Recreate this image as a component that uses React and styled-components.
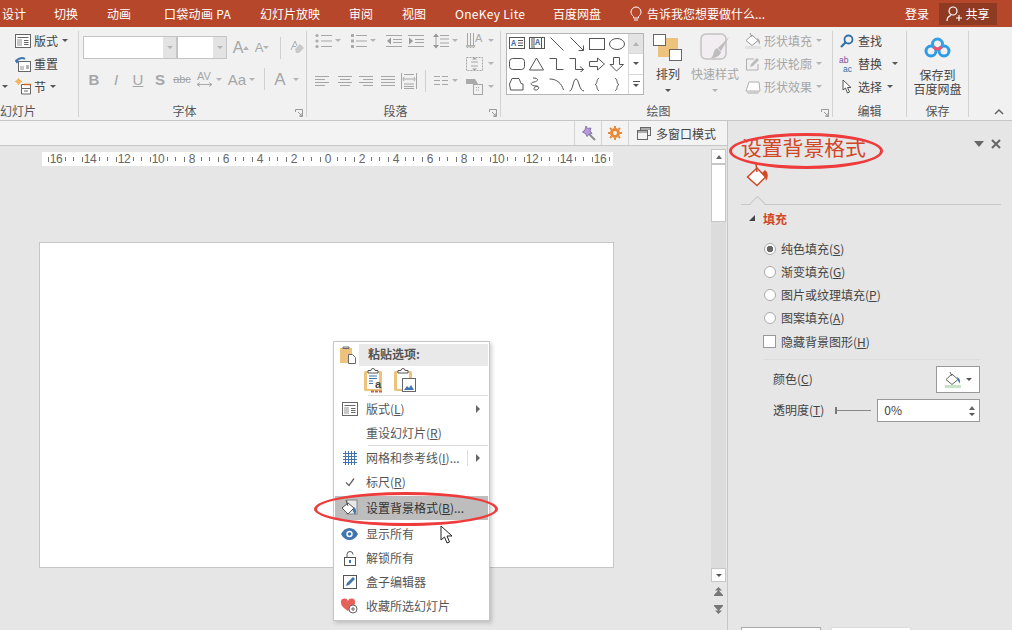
import React from 'react';
import styled, { createGlobalStyle } from 'styled-components';

const colors = {
  accent: '#b7472a',
  accentDark: '#8f3a22',
  ribbon: '#f1f1f1',
  work: '#e6e6e6',
  line: '#c6c6c6',
  text: '#444',
  muted: '#a6a6a6',
  orange: '#d24726',
  red: '#ee3b3b',
  blue: '#3f74ae',
  yellow: '#ecc27c'
};

const GlobalStyle = createGlobalStyle`
  html, body { margin: 0; padding: 0; }
  body {
    width: 1012px;
    height: 630px;
    overflow: hidden;
    font-family: "Noto Sans CJK SC", "Noto Sans", sans-serif;
    font-size: 12px;
    color: ${colors.text};
  }
  * { box-sizing: border-box; }
  u { text-underline-offset: 1px; }
`;

const Page = styled.div`
  position: relative;
  width: 1012px;
  height: 630px;
  overflow: hidden;
  display: flex;
  flex-direction: column;
`;

/* title tabs */
const TabBar = styled.div`
  height: 27px;
  flex: none;
  background: ${colors.accent};
  color: #fff;
  display: flex;
  align-items: center;
  padding-left: 2px;
  line-height: 27px;
`;
const Tab = styled.span`
  width: ${p => p.$w}px;
  flex: none;
  letter-spacing: ${p => (p.$wide ? '0.3px' : '0')};
  white-space: nowrap;
`;
const TellMe = styled.div`
  display: flex;
  align-items: center;
  gap: 5px;
  width: 275px;
  flex: none;
  white-space: nowrap;
`;
const ShareBtn = styled.div`
  width: 58px;
  height: 22px;
  background: ${colors.accentDark};
  display: flex;
  align-items: center;
  justify-content: center;
  gap: 3px;
`;

/* ribbon */
const Ribbon = styled.div`
  height: 94px;
  flex: none;
  background: ${colors.ribbon};
  border-bottom: 1px solid ${colors.line};
  display: flex;
`;
const Group = styled.div`
  width: ${p => p.$w}px;
  flex: none;
  display: flex;
  flex-direction: column;
  position: relative;
  &::after {
    content: '';
    display: ${p => (p.$last ? 'none' : 'block')};
    position: absolute;
    right: 0;
    top: 4px;
    bottom: 3px;
    width: 1px;
    background: #d2d2d2;
  }
`;
const GroupBody = styled.div`
  height: 76px;
  padding-top: 2px;
  display: flex;
`;
const GroupLabel = styled.div`
  height: 17px;
  line-height: 16px;
  text-align: ${p => p.$align || 'center'};
  color: #555;
  padding-right: ${p => (p.$launch ? 17 : p.$align ? 0 : 1)}px;
`;
const LauncherSvg = styled.svg`
  position: absolute;
  right: 4px;
  bottom: 3px;
`;
const CollapseSvg = styled.svg`
  position: absolute;
  right: 9px;
  bottom: 5px;
`;
const Col = styled.div`
  display: flex;
  flex-direction: column;
  width: ${p => (p.$w ? `${p.$w}px` : 'auto')};
  padding-left: ${p => p.$pl || 0}px;
`;
const Row = styled.div`
  display: flex;
  align-items: center;
  height: ${p => p.$h || 23}px;
  margin-top: ${p => p.$mt || 0}px;
  gap: ${p => p.$gap || 0}px;
  color: ${p => (p.$off ? colors.muted : colors.text)};
  white-space: nowrap;
`;
const Caret = styled.i`
  display: block;
  flex: none;
  width: 0;
  height: 0;
  margin-left: ${p => p.$ml || 0}px;
  margin-top: ${p => p.$mt || 0}px;
  border-left: 3px solid transparent;
  border-right: 3px solid transparent;
  border-top: 3px solid ${p => (p.$off ? '#b4b4b4' : '#555')};
`;
const Slot = styled.div`
  width: ${p => p.$w}px;
  flex: none;
  display: flex;
  flex-direction: ${p => (p.$stack ? 'column' : 'row')};
  align-items: center;
  justify-content: center;
  margin-left: ${p => p.$ml || 0}px;
`;
const Combo = styled.div`
  display: flex;
  width: ${p => p.$w}px;
  height: 23px;
  background: #fff;
  border: 1px solid #c4c4c4;
`;
const ComboArrow = styled.div`
  margin-left: auto;
  width: 13px;
  background: #e3e3e3;
  display: flex;
  align-items: center;
  justify-content: center;
`;
const FontGlyph = styled.span`
  font-family: "Liberation Sans", sans-serif;
  font-size: ${p => p.$size || 15}px;
  font-weight: ${p => (p.$bold ? 700 : 400)};
  font-style: ${p => (p.$italic ? 'italic' : 'normal')};
  text-decoration: ${p => p.$deco || 'none'};
  color: ${p => p.$color || colors.muted};
  line-height: 1;
`;
const ToolSep = styled.div`
  width: 1px;
  height: 22px;
  background: #d0d0d0;
  flex: none;
  margin-left: ${p => p.$ml || 0}px;
`;
const Gallery = styled.div`
  margin: 4px 0 0 5px;
  width: 138px;
  height: 62px;
  display: flex;
  background: #fff;
  border: 1px solid #b5b5b5;
`;
const GalleryGrid = styled.div`
  width: 121px;
  display: grid;
  grid-template-columns: repeat(6, 20px);
  grid-auto-rows: 20px;
`;
const GalleryCell = styled.div`
  display: flex;
  align-items: center;
  justify-content: center;
`;
const GalleryScroll = styled.div`
  width: 15px;
  display: flex;
  flex-direction: column;
  border-left: 1px solid #d8d8d8;
`;
const GalleryBtn = styled.div`
  flex: 1;
  display: flex;
  flex-direction: column;
  gap: 2px;
  align-items: center;
  justify-content: center;
  background: ${p => (p.$off ? '#e3e3e3' : '#fff')};
  border-bottom: 1px solid #d8d8d8;
  &:last-child { border-bottom: 0; }
`;
const UpCaret = styled.i`
  display: block;
  width: 0;
  height: 0;
  border-left: 3px solid transparent;
  border-right: 3px solid transparent;
  border-bottom: 4px solid ${p => p.$c || '#b4b4b4'};
`;
const DashLine = styled.i`
  display: block;
  width: 7px;
  height: 1px;
  background: #555;
`;
const BigTool = styled.div`
  width: ${p => p.$w}px;
  margin-left: ${p => p.$ml || 0}px;
  display: flex;
  flex-direction: column;
  align-items: center;
  color: ${p => (p.$off ? colors.muted : colors.text)};
  line-height: 14px;
  white-space: nowrap;
  text-align: center;
`;
const BigIcon = styled.div`
  height: ${p => p.$h}px;
  margin: ${p => p.$mt}px 0 ${p => p.$mb}px;
  display: flex;
  align-items: center;
`;

/* lower area */
const Lower = styled.div`
  flex: 1;
  display: flex;
  min-height: 0;
`;
const LeftPane = styled.div`
  width: 727px;
  flex: none;
  display: flex;
  flex-direction: column;
`;
const SubBar = styled.div`
  height: 25px;
  flex: none;
  background: #f3f3f3;
  border-bottom: 1px solid ${colors.line};
  display: flex;
  justify-content: flex-end;
`;
const SubItem = styled.div`
  height: 24px;
  width: ${p => p.$w}px;
  border-left: 1px solid #d4d4d4;
  display: flex;
  align-items: center;
  justify-content: ${p => (p.$text ? 'flex-start' : 'center')};
  padding-left: ${p => (p.$text ? 8 : 0)}px;
  gap: 5px;
`;
const WorkArea = styled.div`
  flex: 1;
  display: flex;
  background: ${colors.work};
  min-height: 0;
`;
const Canvas = styled.div`
  flex: 1;
  padding-top: 6px;
`;
const RulerBar = styled.div`
  margin-left: 42px;
  width: 571px;
  height: 14px;
  background: #fff;
  padding-left: 6px;
  display: flex;
  overflow: hidden;
`;
const RulerCell = styled.div`
  width: 34px;
  flex: none;
  display: flex;
  align-items: center;
  font-family: "Liberation Sans", sans-serif;
  font-size: 12px;
  color: #666;
`;
const RulerNum = styled.span`
  width: 14px;
  text-align: center;
  letter-spacing: -0.3px;
`;
const Tick = styled.i`
  display: block;
  flex: none;
  width: 1px;
  height: ${p => p.$h || 4}px;
  background: #777;
  margin-left: ${p => p.$ml || 0}px;
`;
const Slide = styled.div`
  margin: 76px 0 0 39px;
  width: 575px;
  height: 326px;
  background: #fff;
  border: 1px solid ${colors.line};
`;
const ScrollBar = styled.div`
  width: 15px;
  margin-right: 1px;
  padding-top: 3px;
  display: flex;
  flex-direction: column;
`;
const ScrollBtn = styled.div`
  height: ${p => p.$h}px;
  flex: none;
  background: #fff;
  border: 1px solid ${colors.line};
  display: flex;
  align-items: center;
  justify-content: center;
`;
const ScrollTrack = styled.div`
  flex: 1;
  background: #dcdcdc;
`;
const ScrollFoot = styled.div`
  height: 48px;
  flex: none;
  display: flex;
  flex-direction: column;
  align-items: center;
  padding-top: 5px;
  gap: 9px;
`;

/* format panel */
const Panel = styled.div`
  flex: 1;
  background: ${colors.work};
  border-left: 1px solid ${colors.line};
  display: flex;
  flex-direction: column;
`;
const PanelHead = styled.div`
  height: 42px;
  flex: none;
  padding: 13px 12px 0 13px;
  display: flex;
  align-items: flex-start;
  justify-content: space-between;
`;
const PanelTitle = styled.div`
  font-size: 20.8px;
  line-height: 26px;
  color: ${colors.orange};
  white-space: nowrap;
`;
const PanelTools = styled.div`
  display: flex;
  align-items: center;
  gap: 7px;
  height: 18px;
  margin: 1px 1px 0 0;
`;
const PanelTab = styled.div`
  height: 42px;
  flex: none;
  margin: 0 13px;
  padding-left: 5px;
  border-bottom: 1px solid #c8c8c8;
  position: relative;
  &::after {
    content: '';
    position: absolute;
    left: 11px;
    bottom: -5px;
    width: 10px;
    height: 10px;
    transform: rotate(45deg);
    background: ${colors.work};
    border-left: 1px solid #c8c8c8;
    border-top: 1px solid #c8c8c8;
  }
`;
const SectionHead = styled.div`
  height: 18px;
  margin-top: 4px;
  padding-left: 21px;
  display: flex;
  align-items: center;
  gap: 8px;
  font-weight: 700;
  color: ${colors.orange};
`;
const SectionMark = styled.i`
  display: block;
  width: 0;
  height: 0;
  border-left: 6px solid transparent;
  border-bottom: 6px solid #444;
`;
const PanelBody = styled.div`
  padding: 10px 34px 0 36px;
  display: flex;
  flex-direction: column;
`;
const OptionRow = styled.div`
  height: ${p => p.$h || 23}px;
  display: flex;
  align-items: center;
  gap: 5px;
  white-space: nowrap;
`;
const Radio = styled.i`
  display: block;
  flex: none;
  width: 12px;
  height: 12px;
  border-radius: 50%;
  background: ${p => (p.$on ? 'radial-gradient(circle, #666 0 3px, #fff 3.6px)' : '#fff')};
  border: 1px solid #aaa;
`;
const Check = styled.i`
  display: block;
  flex: none;
  width: 13px;
  height: 13px;
  margin-left: -1px;
  background: #fff;
  border: 1px solid #999;
`;
const PanelSep = styled.div`
  height: 1px;
  background: #dcdcdc;
  margin-top: 5px;
`;
const FieldRow = styled.div`
  height: ${p => p.$h}px;
  margin-top: 6px;
  padding-left: 9px;
  display: flex;
  align-items: center;
  justify-content: space-between;
  white-space: nowrap;
`;
const FieldText = styled.span`
  padding-bottom: 2px;
`;
const ColorBtn = styled.div`
  width: 44px;
  height: 27px;
  background: #fff;
  border: 1px solid #999;
  display: flex;
  align-items: center;
  padding-left: 8px;
  gap: 5px;
`;
const SlideRail = styled.div`
  width: 36px;
  height: 1px;
  background: #888;
  margin-right: 6px;
  position: relative;
  &::before {
    content: '';
    position: absolute;
    left: 0;
    top: -3px;
    width: 2px;
    height: 7px;
    background: #777;
  }
`;
const FieldLeft = styled.div`
  display: flex;
  align-items: center;
  gap: 11px;
`;
const Spin = styled.div`
  width: 103px;
  height: 23px;
  background: #fff;
  border: 1px solid #999;
  display: flex;
  align-items: center;
  justify-content: space-between;
  padding: 0 4px 2px 6px;
`;
const SpinArrows = styled.div`
  display: flex;
  flex-direction: column;
  gap: 3px;
  margin-top: 2px;
`;
const PanelFoot = styled.div`
  margin-top: auto;
  height: 3px;
  padding-left: 13px;
  display: flex;
  gap: 10px;
`;
const FootTab = styled.div`
  width: 80px;
  background: #fff;
  border: 1px solid ${p => (p.$plain ? '#ddd' : '#aaa')};
  border-bottom: 0;
`;

/* context menu */
const Menu = styled.div`
  position: absolute;
  left: 333px;
  top: 341px;
  width: 157px;
  height: 280px;
  background: #fff;
  border: 1px solid ${colors.line};
  box-shadow: 2px 2px 4px rgba(0, 0, 0, 0.18);
  padding: 1px;
`;
const MenuHead = styled.div`
  height: 23px;
  display: flex;
  align-items: center;
  font-weight: 700;
  color: #555;
`;
const MenuHeadIcon = styled.div`
  width: 24px;
  flex: none;
  padding-left: 5px;
  display: flex;
`;
const MenuHeadText = styled.div`
  flex: 1;
  height: 22px;
  line-height: 20px;
  background: #e9e9e9;
  padding-left: 9px;
`;
const PasteRow = styled.div`
  height: 28px;
  padding-left: 29px;
  display: flex;
  align-items: center;
  gap: 8px;
`;
const MenuSep = styled.div`
  height: 1px;
  background: #dcdcdc;
  margin: ${p => p.$mt || 0}px 0 0 33px;
`;
const MenuRow = styled.div`
  height: 24px;
  margin-top: ${p => p.$mt || 0}px;
  display: flex;
  align-items: center;
  background: ${p => (p.$active ? '#bdbdbd' : 'transparent')};
  white-space: nowrap;
  color: ${p => (p.$active ? '#333' : '#555')};
`;
const MenuIcon = styled.div`
  width: 31px;
  flex: none;
  display: flex;
  justify-content: center;
  padding-right: 2px;
`;
const MenuLabel = styled.div`
  flex: 1;
  padding-bottom: 2px;
`;
const SubArrow = styled.i`
  display: block;
  width: 0;
  height: 0;
  margin-right: 8px;
  border-top: 4px solid transparent;
  border-bottom: 4px solid transparent;
  border-left: 4px solid #666;
`;
const MenuBar = styled.i`
  display: block;
  width: 1px;
  height: 16px;
  background: #ddd;
  margin-right: 8px;
`;

/* marks drawn over the shot */
const RedOval = styled.div`
  position: absolute;
  left: ${p => p.$x}px;
  top: ${p => p.$y}px;
  width: ${p => p.$w}px;
  height: ${p => p.$h}px;
  border: 3px solid ${colors.red};
  border-radius: 50%;
  pointer-events: none;
`;
const Pointer = styled.svg`
  position: absolute;
  left: 440px;
  top: 525px;
`;

/* icons */
const Ic = ({ w = 16, h = 16, children, stroke = '#666', fill = 'none', sw = 1 }) => (
  <svg width={w} height={h} viewBox={`0 0 ${w} ${h}`} fill={fill} stroke={stroke} strokeWidth={sw} style={{ flex: 'none', display: 'block' }}>
    {children}
  </svg>
);
const DialogLauncher = () => (
  <LauncherSvg width="8" height="8" viewBox="0 0 8 8" fill="none" stroke="#999">
    <path d="M.5 3V.5H7.5V7.5H5M3 3l4 4M7 4v3H4" />
  </LauncherSvg>
);
const Bulb = () => (
  <Ic w={12} h={16} stroke="#fff">
    <path d="M3.5 10.5C2 9 1 8 1 6a5 5 0 0 1 10 0c0 2-1 3-2.5 4.5v1.5h-5zM4 14h4" />
  </Ic>
);
const UserPlus = () => (
  <Ic w={16} h={16} stroke="#fff" sw={1.2}>
    <circle cx="7" cy="5" r="4" />
    <path d="M1 15c0-3 2-5 4-5.5M10 12h6M13 9v6" />
  </Ic>
);
const LayoutIcon = ({ c = '#666' }) => (
  <Ic w={16} h={14} stroke={c}>
    <rect x=".5" y=".5" width="15" height="13" fill="#fff" />
    <path d="M2.5 3.5h11" />
    <rect x="2" y="5" width="5" height="7" fill="#c8c8c8" stroke="none" />
    <path d="M9 6.5h4.5M9 8.5h4.5M9 10.5h4.5" />
  </Ic>
);
const ResetIcon = () => (
  <Ic w={16} h={16} stroke="#666">
    <rect x="3.5" y="5.5" width="12" height="10" fill="#fff" />
    <rect x="5" y="10" width="4" height="4" fill="#c8c8c8" stroke="none" />
    <path d="M11 10h3M11 12h3" />
    <path d="M1 6C2 2.5 7 1 10 3" stroke="#3f74ae" strokeWidth="2" />
    <path d="M0 3.5l1.5 4 3.5-2z" fill="#3f74ae" stroke="none" />
  </Ic>
);
const SectionIcon = () => (
  <Ic w={16} h={18} stroke="#666">
    <path d="M6.5 6.5h9v4h-9zM6.5 10.5v5.5h9v-5.500" fill="#fff" />
    <path d="M9 6.5h6.5v-.5" stroke="#d2691e" strokeWidth="1.5" />
    <path d="M9 13h4" />
    <circle cx="3.5" cy="3.5" r="2" fill="#f2b45a" stroke="#f2b45a" />
    <path d="M3.5 0v7M0 3.5h7" stroke="#f2b45a" />
  </Ic>
);
const Eraser = () => (
  <Ic w={16} h={16} stroke="#b0b0b0">
    <path d="M7 8l5-5 4 4-5 5H8z" fill="#c8c8c8" stroke="none" transform="translate(-1 1)" />
    <path d="M2 10l4-9 2 5" />
    <path d="M3 6.5h4" stroke="#9ab4d0" />
  </Ic>
);
const listIcon = (marks, c = colors.muted, x = 6, n = 3, w = 18) => (
  <Ic w={w} h={16} stroke={c}>
    {Array.from({ length: n }, (_, i) => (
      <path key={i} d={`M${x} ${2.5 + i * 5.5}h${w - x - 1}`} />
    ))}
    {marks}
  </Ic>
);
const Bullets = () => listIcon(
  <g fill="#aaa" stroke="none">
    <circle cx="2" cy="2.5" r="1.6" />
    <circle cx="2" cy="8" r="1.6" />
    <circle cx="2" cy="13.5" r="1.6" />
  </g>
);
const Numbers = () => listIcon(
  <g fill="#aaa" stroke="none">
    <rect x="1" y="1" width="3" height="3" />
    <rect x="1" y="6.5" width="3" height="3" />
    <rect x="1" y="12" width="3" height="3" />
  </g>
);
const Indent = ({ out }) => (
  <Ic w={16} h={14} stroke={colors.muted}>
    <path d="M0 1.5h16M7 5.5h9M7 8.5h9M0 12.5h16" />
    <path d={out ? 'M5 3.5v7L1 7z' : 'M1 3.5v7L5 7z'} fill="#999" stroke="none" />
  </Ic>
);
const LineSpace = () => (
  <Ic w={16} h={16} stroke={colors.muted}>
    <path d="M7 2.5h9M7 6h9M7 10h9M7 13.5h9M3 1v14" />
    <path d="M0 4l3-3.5L6 4zM0 12l3 3.5L6 12z" fill="#999" stroke="none" />
  </Ic>
);
const TextDir = () => (
  <Ic w={17} h={18} stroke={colors.muted}>
    <path d="M1.5 1v13M4.5 1v13M7.5 1v13" />
    <path d="M0 13l1.5 3L3 13M3 13l1.5 3L6 13M6 13l1.5 3L9 13" />
    <text x="9" y="10" fontSize="11" fontFamily="Liberation Sans" fill="#aaa" stroke="none">A</text>
  </Ic>
);
const AlignV = () => (
  <Ic w={17} h={18} stroke={colors.muted}>
    <rect x=".5" y="2.5" width="16" height="13" strokeDasharray="2 1" />
    <path d="M5 7h7M5 11h7" />
    <path d="M6 4.5l2.5-2 2.5 2zM6 13.5l2.5 2 2.5-2z" fill="#999" stroke="none" />
  </Ic>
);
const SmartArt = () => (
  <Ic w={17} h={16} stroke={colors.muted}>
    <path d="M0 0h9l3 5H0z" fill="#aaa" stroke="none" />
    <rect x="7.5" y="5.5" width="9" height="10" fill="#f1f1f1" />
    <path d="M10 8.5h4M10 11h4" strokeDasharray="1 1" />
  </Ic>
);
const AlignLines = ({ kind }) => {
  const rows = {
    left: ['M0 1.5h14', 'M0 4.5h10', 'M0 7.5h14', 'M0 10.5h10'],
    center: ['M0 1.5h14', 'M2 4.5h10', 'M0 7.5h14', 'M2 10.5h10'],
    right: ['M0 1.5h14', 'M4 4.5h10', 'M0 7.5h14', 'M4 10.5h10'],
    full: ['M0 1.5h14', 'M0 4.5h14', 'M0 7.5h14', 'M0 10.5h14']
  };
  return <Ic w={14} h={12} stroke={colors.muted}><path d={rows[kind].join('')} /></Ic>;
};
const Distribute = () => (
  <Ic w={16} h={16} stroke={colors.muted}>
    <path d="M.5 0v16M15.5 0v16M3 1.5h10M3 11h10M3 13.5h10M3 15.5h10M3 6h10" />
    <path d="M3 4l-1 2 1 2M13 4l1 2-1 2" />
  </Ic>
);
const Columns = () => (
  <Ic w={14} h={12} stroke={colors.muted}>
    <path d="M0 1.5h6M8 1.5h6M0 5.5h6M8 5.5h6M0 9.5h6M8 9.5h6" />
  </Ic>
);
const shapes = [
  <>
    <rect x=".5" y=".5" width="15" height="11" />
    <path d="M9 3.5h5M9 6h5M9 8.5h5" />
    <text x="2" y="9" fontSize="8" fontWeight="700" fill="#3f74ae" stroke="none">A</text>
  </>,
  <>
    <rect x=".5" y=".5" width="15" height="11" />
    <path d="M3 1v10M5 1v10M12.5 1v10" />
    <text x="6" y="8" fontSize="8" fontWeight="700" fill="#3f74ae" stroke="none">A</text>
  </>,
  <path d="M1.5.5l13 13" />,
  <path d="M1.5.5l13 13M14.5 8.5v5h-5" />,
  <rect x=".5" y="1.5" width="15" height="11" />,
  <ellipse cx="8" cy="7" rx="7.5" ry="5.5" />,
  <rect x=".5" y="1.5" width="15" height="11" rx="3" />,
  <path d="M7.5 1L14.5 13H.5z" />,
  <path d="M.5 1.5h7v11h7" />,
  <path d="M.5 1.5h6v11h8M11 9.5l3.500 3-3.500 3" />,
  <path d="M.5 4.5h8V1l7 6-7 6V9.5h-8z" />,
  <path d="M4.5.5h6v7h4L7.5 14 1 7.5h3.500z" />,
  <path d="M.5 7L3 1.5h7L12 6.5l2 .5v6H1.5z" />,
  <path d="M4 1c6 0 6 3 1 4s-3 4 2 4 2 5-1 4 1-5 3-3" />,
  <path d="M.5 2c7 0 12 4 14 11" />,
  <path d="M.5 14C4 14 4 2 7 2s3 12 8 12" />,
  <path d="M10 1.5C7 1.5 9 7 6 7.5c3 .5 1 6 4 6" />,
  <path d="M6 1.5c3 0 1 5.5 4 6-3 .5-1 6-4 6" />
];
const ShapeCell = ({ children }) => (
  <GalleryCell>
    <Ic w={16} h={15} stroke="#555">{children}</Ic>
  </GalleryCell>
);
const Arrange = () => (
  <Ic w={30} h={28} stroke="#666">
    <rect x="5" y="4" width="20" height="19" fill={colors.yellow} stroke="none" />
    <rect x=".5" y=".5" width="12" height="11" fill="#fff" />
    <rect x="16.5" y="15.5" width="12" height="11" fill="#fff" />
  </Ic>
);
const QuickStyle = () => (
  <Ic w={30} h={30} stroke="#c2c2c2" sw={1.5}>
    <rect x="1" y="1" width="25" height="25" rx="5" fill="#f1edf0" />
    <path d="M29 4L18 15l3 3z" fill="#bdbdbd" stroke="none" />
    <path d="M17 15l4 4c-1 4-5 6-10 6 3-2 2-8 6-10z" fill="#bdbdbd" stroke="none" />
  </Ic>
);
const Bucket = ({ c = '#999', drip = '#aaa', mark = '#e2e2e2' }) => (
  <Ic w={16} h={16} stroke={c}>
    <path d="M1 7.5L7 2l6 5.5-6 5z" fill="#fff" />
    <path d="M5 0l2 4" />
    <path d="M12 5c3 1.5 3.5 4 2.5 6.5l-1.5-3z" fill={drip} stroke="none" />
    <rect x="0" y="13" width="16" height="3" fill={mark} stroke="none" />
  </Ic>
);
const Pencil = () => (
  <Ic w={16} h={16} stroke="#b0b0b0">
    <path d="M9 3H1.5v11H13V8" />
    <path d="M5 11l1-3 6-6 2 2-6 6z" fill="#bbb" stroke="none" />
  </Ic>
);
const EffectIcon = () => (
  <Ic w={16} h={16} stroke="#b0b0b0">
    <path d="M1 12L4 3h10l1 9z" fill="#fff" />
    <path d="M1 12h14l-2 3H3z" fill="#ccc" stroke="none" />
  </Ic>
);
const Find = () => (
  <Ic w={14} h={14} stroke="#2f6fa8" sw={1.8}>
    <circle cx="8.5" cy="5.5" r="4" />
    <path d="M5.5 8.5L1 13" strokeWidth="2.2" />
  </Ic>
);
const ReplaceIcon = () => (
  <Ic w={16} h={18} stroke="none">
    <text x="0" y="8" fontSize="8.5" fontFamily="Liberation Sans" fill="#7a4ea0">ab</text>
    <text x="4" y="17" fontSize="8.5" fontFamily="Liberation Sans" fill="#2f6fa8">ac</text>
  </Ic>
);
const Arrow = () => (
  <Ic w={10} h={15} stroke="#555" fill="#fff">
    <path d="M1 1v10l2.5-2 2 5 2-1-2-4.5h3.5z" />
  </Ic>
);
const Baidu = () => (
  <Ic w={27} h={22} stroke="#2d9be5" sw={3}>
    <circle cx="7" cy="14" r="5" />
    <circle cx="20" cy="14" r="5" />
    <circle cx="13.5" cy="7" r="5" stroke="#35a0e8" />
    <path d="M9.5 10c2 2.5 6 2.5 8 0" stroke="#f0516a" />
  </Ic>
);
const Wand = () => (
  <Ic w={16} h={16} stroke="#8c8c8c" sw={1.5}>
    <path d="M8 8l7 7" strokeWidth="2" />
    <path d="M6 1l1.5 2.5L11 3l-1 3 2 2.5-3 .5-2 2.5-1.5-3L2.5 7 5 5z" fill="#b79ad8" stroke="#8a74ad" strokeWidth="1" />
  </Ic>
);
const Gear = () => (
  <Ic w={14} h={14} stroke="#e8893a" sw={3}>
    <circle cx="7" cy="7" r="3.5" />
    <path d="M7 0v2M7 12v2M0 7h2M12 7h2M2 2l1.5 1.5M10.500 10.500L12 12M2 12l1.5-1.5M10.500 3.500L12 2" strokeWidth="2" />
  </Ic>
);
const Windows = () => (
  <Ic w={14} h={13} stroke="#666">
    <rect x="3.5" y=".5" width="10" height="8" fill="#f3f3f3" />
    <rect x=".5" y="3.5" width="10" height="9" fill="#f3f3f3" />
    <path d="M.5 5h10M3.5 2h10" />
  </Ic>
);
const Clipboard = ({ children }) => (
  <Ic w={22} h={25} stroke="#666">
    <rect x="0" y="3" width="18" height="20" rx="1.5" fill={colors.yellow} stroke="none" />
    <rect x="3" y="5" width="12" height="16" fill="#fff" stroke="none" />
    <path d="M4 5V2.5h3a1.500 1.500 0 0 1 4 0h3V5z" fill="#fff" stroke="#555" />
    {children}
  </Ic>
);
const GridIcon = () => (
  <Ic w={14} h={14} stroke={colors.blue}>
    <path d="M0 2.5h14M0 5.5h14M0 8.5h14M0 11.5h14M2.5 0v14M5.5 0v14M8.5 0v14M11.5 0v14" />
  </Ic>
);
const CheckMark = () => (
  <Ic w={10} h={10} stroke="#666" sw={1.3}>
    <path d="M1 5.5L4 8.5 9 1.5" />
  </Ic>
);
const Eye = () => (
  <Ic w={17} h={12} stroke="none">
    <path d="M0 6c4-8 13-8 17 0-4 8-13 8-17 0z" fill={colors.blue} />
    <circle cx="8.5" cy="6" r="3.2" fill="#fff" />
    <circle cx="8.5" cy="6" r="1.8" fill={colors.blue} />
  </Ic>
);
const Lock = () => (
  <Ic w={12} h={15} stroke="#555">
    <rect x=".5" y="6.5" width="11" height="8" fill="#fff" />
    <path d="M3 6.5V3.5a3 3 0 0 1 6 0" />
    <rect x="5" y="9" width="2" height="3" fill="#3f74ae" stroke="none" />
  </Ic>
);
const EditBox = () => (
  <Ic w={14} h={14} stroke="#555">
    <rect x=".5" y=".5" width="13" height="13" fill="#fff" />
    <path d="M3 11l1-3 6-6 2 2-6 6z" fill={colors.blue} stroke="none" />
  </Ic>
);
const Heart = () => (
  <Ic w={17} h={16} stroke="none">
    <path d="M7 13C3 10 0 8 0 4.5a3.5 3.5 0 0 1 7-1 3.5 3.5 0 0 1 7 1C14 8 11 10 7 13z" fill="#e8605a" />
    <circle cx="12" cy="11" r="4" fill="#fff" stroke="#666" />
    <path d="M12 9v4M10 11h4" stroke="#666" />
  </Ic>
);
const BgFormat = () => (
  <Ic w={18} h={18} stroke="#555">
    <rect x="6" y="1" width="10" height="14" fill="#e8e8e8" stroke="#888" />
    <path d="M1 9l6-5 6 5-6 6z" fill="#fff" />
    <path d="M5 1l2 6" />
    <path d="M13 8c2.500 2 2.500 5 1 8l-2.500-5z" fill={colors.blue} stroke="none" />
  </Ic>
);
const PanelBucket = () => (
  <Ic w={24} h={26} stroke={colors.orange} sw={1.5}>
    <path d="M1.5 14L11 5l8.5 9-8.500 8.500z" fill="#fff" />
    <path d="M10 1l1 8" />
    <path d="M19 7c4 3 3 8 1 11l-1-5-3-3z" fill={colors.orange} stroke="none" />
  </Ic>
);

const rulerMarks = [16, 14, 12, 10, 8, 6, 4, 2, 0, 2, 4, 6, 8, 10, 12, 14, 16];

const MnemonicText = ({ text, k, tail = '' }) => (
  <span>{text}(<u>{k}</u>){tail}</span>
);

const App = () => (
  <Page>
    <GlobalStyle />
    <TabBar>
      <Tab $w={52}>设计</Tab>
      <Tab $w={53}>切换</Tab>
      <Tab $w={57}>动画</Tab>
      <Tab $w={96} $wide>口袋动画 PA</Tab>
      <Tab $w={89}>幻灯片放映</Tab>
      <Tab $w={53}>审阅</Tab>
      <Tab $w={53}>视图</Tab>
      <Tab $w={98} $wide>OneKey Lite</Tab>
      <Tab $w={77}>百度网盘</Tab>
      <TellMe><Bulb />告诉我您想要做什么...</TellMe>
      <Tab $w={34}>登录</Tab>
      <ShareBtn><UserPlus />共享</ShareBtn>
    </TabBar>

    <Ribbon>
      <Group $w={79}>
        <GroupBody>
          <Col $w={15}>
            <Row />
            <Row />
            <Row><Caret $ml={2} /></Row>
          </Col>
          <Col>
            <Row $gap={3}><LayoutIcon />版式<Caret $ml={1} /></Row>
            <Row $gap={3}><ResetIcon />重置</Row>
            <Row $gap={3}><SectionIcon />节<Caret $ml={1} /></Row>
          </Col>
        </GroupBody>
        <GroupLabel $align="left">幻灯片</GroupLabel>
      </Group>

      <Group $w={228}>
        <GroupBody>
          <Col $pl={4}>
            <Row $mt={7}>
              <Combo $w={94}><ComboArrow><Caret $off /></ComboArrow></Combo>
              <Combo $w={50}><ComboArrow><Caret $off /></ComboArrow></Combo>
              <Slot $w={22} $ml={3}><FontGlyph $size={16}>A</FontGlyph><UpCaret /></Slot>
              <Slot $w={20}><FontGlyph $size={13}>A</FontGlyph><Caret $off /></Slot>
              <ToolSep $ml={8} />
              <Slot $w={24} $ml={4}><Eraser /></Slot>
            </Row>
            <Row $mt={9} $h={22}>
              <Slot $w={22}><FontGlyph $bold>B</FontGlyph></Slot>
              <Slot $w={22}><FontGlyph $italic>I</FontGlyph></Slot>
              <Slot $w={22}><FontGlyph $deco="underline">U</FontGlyph></Slot>
              <Slot $w={22}><FontGlyph $bold>S</FontGlyph></Slot>
              <Slot $w={22}><FontGlyph $size={11} $deco="line-through">abc</FontGlyph></Slot>
              <Slot $w={22} $stack>
                <FontGlyph $size={11}>AV</FontGlyph>
                <svg width="15" height="5" viewBox="0 0 15 5" fill="none" stroke="#aaa"><path d="M0 2.5h15M3 .5l-3 2 3 2M12 .5l3 2-3 2" /></svg>
              </Slot>
              <Caret $off $ml={1} />
              <Slot $w={22} $ml={4}><FontGlyph $size={15}>Aa</FontGlyph></Slot>
              <Caret $off $ml={1} />
              <ToolSep $ml={9} />
              <Slot $w={22} $ml={4}><FontGlyph $size={17}>A</FontGlyph></Slot>
              <Caret $off $ml={2} />
            </Row>
          </Col>
        </GroupBody>
        <GroupLabel $launch>字体</GroupLabel>
        <DialogLauncher />
      </Group>

      <Group $w={194}>
        <GroupBody>
          <Col $w={159} $pl={8}>
            <Row>
              <Slot $w={18}><Bullets /></Slot>
              <Caret $off $ml={2} />
              <Slot $w={20} $ml={8}><Numbers /></Slot>
              <Caret $off $ml={1} />
              <Slot $w={16} $ml={10}><Indent out /></Slot>
              <Slot $w={16} $ml={6}><Indent /></Slot>
              <Slot $w={18} $ml={8}><LineSpace /></Slot>
              <Caret $off $ml={2} />
            </Row>
            <Row $mt={17}>
              <Slot $w={14}><AlignLines kind="left" /></Slot>
              <Slot $w={14} $ml={9}><AlignLines kind="center" /></Slot>
              <Slot $w={14} $ml={7}><AlignLines kind="right" /></Slot>
              <Slot $w={14} $ml={8}><AlignLines kind="full" /></Slot>
              <Slot $w={16} $ml={6}><Distribute /></Slot>
              <ToolSep $ml={8} />
              <Slot $w={14} $ml={8}><Columns /></Slot>
              <Caret $off $ml={4} />
            </Row>
          </Col>
          <Col>
            <Row $gap={5}><TextDir /><Caret $off /></Row>
            <Row $gap={5}><AlignV /><Caret $off /></Row>
            <Row $gap={5}><SmartArt /><Caret $off /></Row>
          </Col>
        </GroupBody>
        <GroupLabel $launch>段落</GroupLabel>
        <DialogLauncher />
      </Group>

      <Group $w={332}>
        <GroupBody>
          <Gallery>
            <GalleryGrid>
              {shapes.map((s, i) => <ShapeCell key={i}>{s}</ShapeCell>)}
            </GalleryGrid>
            <GalleryScroll>
              <GalleryBtn $off><UpCaret /></GalleryBtn>
              <GalleryBtn><Caret /></GalleryBtn>
              <GalleryBtn><DashLine /><Caret /></GalleryBtn>
            </GalleryScroll>
          </Gallery>
          <BigTool $w={30} $ml={9}>
            <BigIcon $mt={4} $h={30} $mb={4}><Arrange /></BigIcon>
            排列
            <Caret $mt={8} />
          </BigTool>
          <BigTool $w={50} $ml={7} $off>
            <BigIcon $mt={4} $h={30} $mb={4}><QuickStyle /></BigIcon>
            快速样式
            <Caret $off $mt={8} />
          </BigTool>
          <Col $pl={5}>
            <Row $off $gap={3}><Bucket />形状填充<Caret $off $ml={1} /></Row>
            <Row $off $gap={3}><Pencil />形状轮廓<Caret $off $ml={1} /></Row>
            <Row $off $gap={3}><EffectIcon />形状效果<Caret $off $ml={1} /></Row>
          </Col>
        </GroupBody>
        <GroupLabel $launch>绘图</GroupLabel>
        <DialogLauncher />
      </Group>

      <Group $w={74}>
        <GroupBody>
          <Col $pl={6}>
            <Row $gap={4}><Slot $w={15}><Find /></Slot>查找</Row>
            <Row $gap={4}><Slot $w={15}><ReplaceIcon /></Slot>替换<Caret $ml={6} /></Row>
            <Row $gap={4}><Slot $w={15}><Arrow /></Slot>选择<Caret $ml={1} /></Row>
          </Col>
        </GroupBody>
        <GroupLabel>编辑</GroupLabel>
      </Group>

      <Group $w={62}>
        <GroupBody>
          <BigTool $w={61}>
            <BigIcon $mt={5} $h={28} $mb={6}><Baidu /></BigIcon>
            保存到<br />百度网盘
          </BigTool>
        </GroupBody>
        <GroupLabel>保存</GroupLabel>
      </Group>

      <Group $w={44} $last>
        <GroupBody />
        <CollapseSvg width="10" height="6" viewBox="0 0 10 6" fill="none" stroke="#666" strokeWidth="1.5">
          <path d="M1 5l4-4 4 4" />
        </CollapseSvg>
      </Group>
    </Ribbon>

    <Lower>
      <LeftPane>
        <SubBar>
          <SubItem $w={27}><Wand /></SubItem>
          <SubItem $w={27}><Gear /></SubItem>
          <SubItem $w={99} $text><Windows />多窗口模式</SubItem>
        </SubBar>
        <WorkArea>
          <Canvas>
            <RulerBar>
              {rulerMarks.map((n, i) => (
                <RulerCell key={i}>
                  <Tick $h={5} />
                  <RulerNum>{n}</RulerNum>
                  <Tick $ml={2} />
                  <Tick $ml={7} />
                </RulerCell>
              ))}
            </RulerBar>
            <Slide />
          </Canvas>
          <ScrollBar>
            <ScrollBtn $h={15}><UpCaret $c="#666" /></ScrollBtn>
            <ScrollBtn $h={58} />
            <ScrollTrack />
            <ScrollBtn $h={14}><Caret /></ScrollBtn>
            <ScrollFoot>
              <svg width="9" height="9" viewBox="0 0 9 9" fill="#777"><path d="M4.5 0L8 3.5H1zM4.5 3L9 8H0zM0 8h9v1H0z" /></svg>
              <svg width="9" height="9" viewBox="0 0 9 9" fill="#777"><path d="M0 0h9v1H0zM4.5 6L0 1h9zM4.5 9L1 5.5h7z" /></svg>
            </ScrollFoot>
          </ScrollBar>
        </WorkArea>
      </LeftPane>

      <Panel>
        <PanelHead>
          <PanelTitle>设置背景格式</PanelTitle>
          <PanelTools>
            <svg width="10" height="6" viewBox="0 0 10 6" fill="#666"><path d="M0 0h10L5 6z" /></svg>
            <svg width="10" height="10" viewBox="0 0 10 10" stroke="#666" strokeWidth="2"><path d="M1 1l8 8M9 1l-8 8" /></svg>
          </PanelTools>
        </PanelHead>
        <PanelTab><PanelBucket /></PanelTab>
        <SectionHead><SectionMark />填充</SectionHead>
        <PanelBody>
          <OptionRow><Radio $on /><MnemonicText text="纯色填充" k="S" /></OptionRow>
          <OptionRow><Radio /><MnemonicText text="渐变填充" k="G" /></OptionRow>
          <OptionRow><Radio /><MnemonicText text="图片或纹理填充" k="P" /></OptionRow>
          <OptionRow><Radio /><MnemonicText text="图案填充" k="A" /></OptionRow>
          <OptionRow $h={25}><Check /><MnemonicText text="隐藏背景图形" k="H" /></OptionRow>
          <PanelSep />
          <FieldRow $h={27}>
            <FieldText><MnemonicText text="颜色" k="C" /></FieldText>
            <ColorBtn><Bucket c="#666" drip={colors.blue} mark="#c9e3c9" /><Caret /></ColorBtn>
          </FieldRow>
          <FieldRow $h={23}>
            <FieldLeft><FieldText><MnemonicText text="透明度" k="T" /></FieldText><SlideRail /></FieldLeft>
            <Spin>
              0%
              <SpinArrows><UpCaret $c="#666" /><Caret /></SpinArrows>
            </Spin>
          </FieldRow>
        </PanelBody>
        <PanelFoot><FootTab /><FootTab $plain /></PanelFoot>
      </Panel>
    </Lower>

    <Menu>
      <MenuHead>
        <MenuHeadIcon>
          <Ic w={18} h={18} stroke="#666">
            <rect x="0" y="2" width="12" height="15" fill={colors.yellow} stroke="none" />
            <path d="M3 2.5V1h6v1.5z" fill="#fff" />
            <path d="M8.5 8.5h4l3 3v6h-7z" fill="#fff" />
          </Ic>
        </MenuHeadIcon>
        <MenuHeadText>粘贴选项:</MenuHeadText>
      </MenuHead>
      <PasteRow>
        <Clipboard>
          <path d="M5 8h8M5 10.500h8M5 13h4M5 15.500h4" stroke={colors.blue} />
          <text x="11" y="20" fontSize="11" fontWeight="700" fill="#444" stroke="none" fontFamily="Liberation Sans">a</text>
          <path d="M7 23.500h3M11 23.500h3M15 23.500h3" stroke="#c8644a" strokeWidth="2" />
        </Clipboard>
        <Clipboard>
          <rect x="8.5" y="10.5" width="13" height="13" fill="#fff" />
          <path d="M10 22l3-4 2 2 2-3 3 5z" fill={colors.blue} stroke="none" />
        </Clipboard>
      </PasteRow>
      <MenuSep $mt={1} />
      <MenuRow $mt={1}><MenuIcon><LayoutIcon /></MenuIcon><MenuLabel><MnemonicText text="版式" k="L" /></MenuLabel><SubArrow /></MenuRow>
      <MenuRow><MenuIcon /><MenuLabel><MnemonicText text="重设幻灯片" k="R" /></MenuLabel></MenuRow>
      <MenuSep />
      <MenuRow><MenuIcon><GridIcon /></MenuIcon><MenuLabel><MnemonicText text="网格和参考线" k="I" tail="..." /></MenuLabel><MenuBar /><SubArrow /></MenuRow>
      <MenuRow><MenuIcon><CheckMark /></MenuIcon><MenuLabel><MnemonicText text="标尺" k="R" /></MenuLabel></MenuRow>
      <MenuRow $mt={2} $active><MenuIcon><BgFormat /></MenuIcon><MenuLabel><MnemonicText text="设置背景格式" k="B" tail="..." /></MenuLabel></MenuRow>
      <MenuRow $mt={2}><MenuIcon><Eye /></MenuIcon><MenuLabel>显示所有</MenuLabel></MenuRow>
      <MenuRow><MenuIcon><Lock /></MenuIcon><MenuLabel>解锁所有</MenuLabel></MenuRow>
      <MenuRow><MenuIcon><EditBox /></MenuIcon><MenuLabel>盒子编辑器</MenuLabel></MenuRow>
      <MenuRow><MenuIcon><Heart /></MenuIcon><MenuLabel>收藏所选幻灯片</MenuLabel></MenuRow>
    </Menu>

    <RedOval $x={729} $y={133} $w={154} $h={36} />
    <RedOval $x={314} $y={492} $w={184} $h={34} />
    <Pointer width="14" height="19" viewBox="0 0 14 19" fill="#fff" stroke="#222">
      <path d="M1 1v14l3.5-3 2.5 6 2.500-1-2.500-6h5z" />
    </Pointer>
  </Page>
);

export default App;
